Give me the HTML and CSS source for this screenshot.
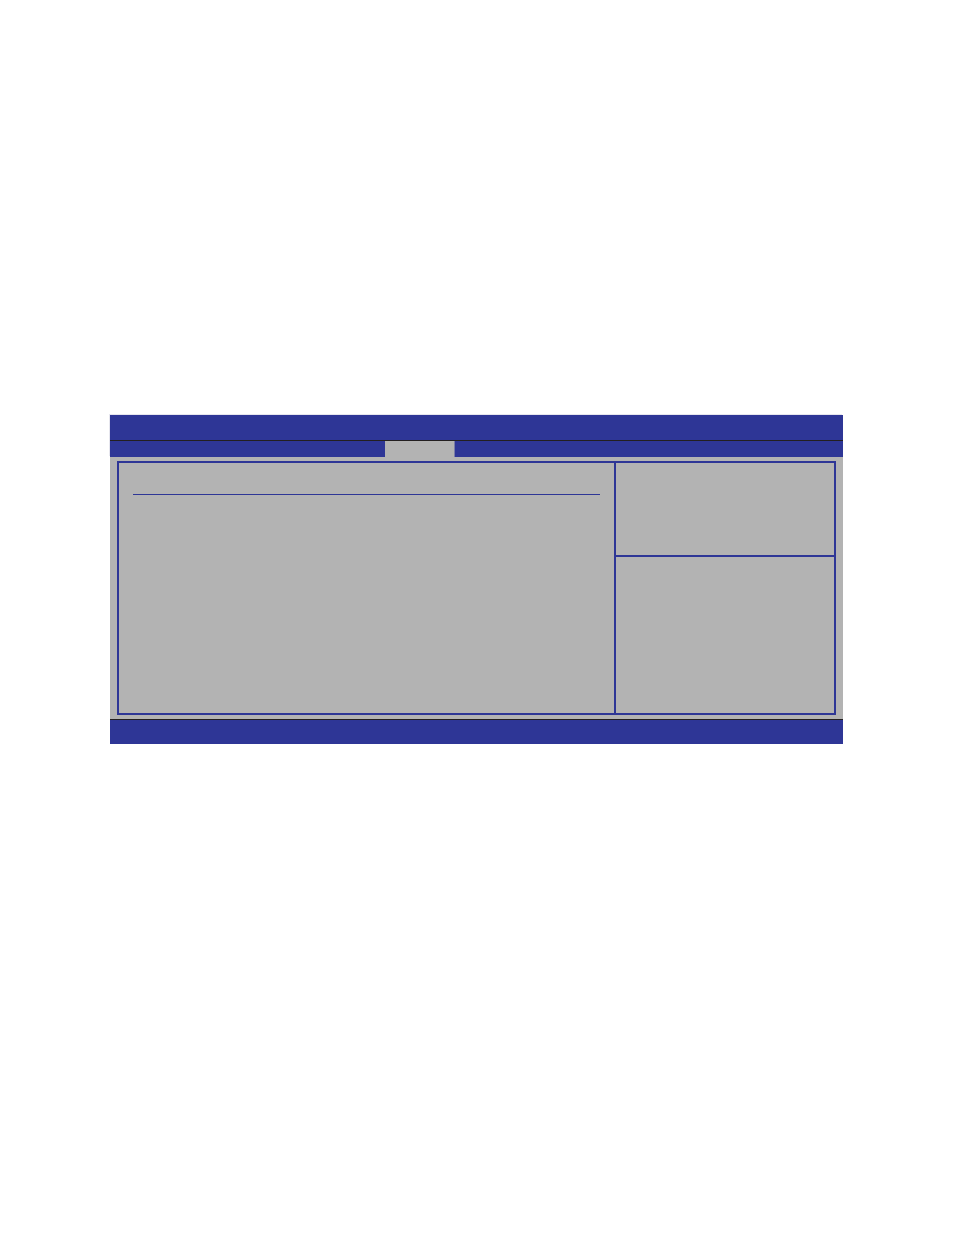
FILE: index.html
```html
<!DOCTYPE html>
<html lang="en">
<head>
  <meta charset="UTF-8" />
  <meta name="viewport" content="width=device-width, initial-scale=1.0"/>
  <title>Setup Utility</title>
  <link rel="stylesheet" href="styles.css">
</head>
<body>

  <div class="setup">
    <header class="setup-header">
      <div class="title-bar"></div>
      <nav class="tab-bar">
        <button type="button" class="tab" aria-label="Current tab"></button>
      </nav>
    </header>

    <main class="setup-body">
      <div class="frame">
        <section class="options">
          <hr class="rule">
        </section>
        <aside class="side">
          <div class="help"></div>
          <div class="keys"></div>
        </aside>
      </div>
    </main>

    <footer class="setup-footer"></footer>
  </div>

</body>
</html>
```

FILE: styles.css
```css
body {
  font-family: 'Liberation Sans', sans-serif;
  background: #fff;
  margin: 0;
  padding: 415px 110px;
}
.setup {
  background: #b3b3b3;
}
.setup-header {
  background: #2e3696;
  box-shadow: -1px -1px 0 #e6e6ee;
}
.title-bar {
  height: 25px;
  border-bottom: 1px solid #231f20;
}
.tab-bar {
  display: flex;
  height: 16px;
  padding-left: 275px;
}
.tab {
  width: 70px;
  padding: 0;
  border: none;
  border-right: 1px solid #7a7da8;
  background: #b3b3b3;
}
.setup-body {
  padding: 4px 7px;
}
.frame {
  display: grid;
  grid-template-columns: 1fr 220px;
  min-height: 250px;
  border: 2px solid #2e3696;
}
.options {
  padding: 31px 14px;
}
.rule {
  height: 1px;
  margin: 0;
  border: none;
  background: #2e3696;
}
.side {
  display: flex;
  flex-direction: column;
  border-left: 2px solid #2e3696;
}
.help {
  height: 92px;
  border-bottom: 2px solid #2e3696;
}
.keys {
  flex: 1;
}
.setup-footer {
  height: 24px;
  background: #2e3696;
  border-top: 1px solid #231f20;
}
```
